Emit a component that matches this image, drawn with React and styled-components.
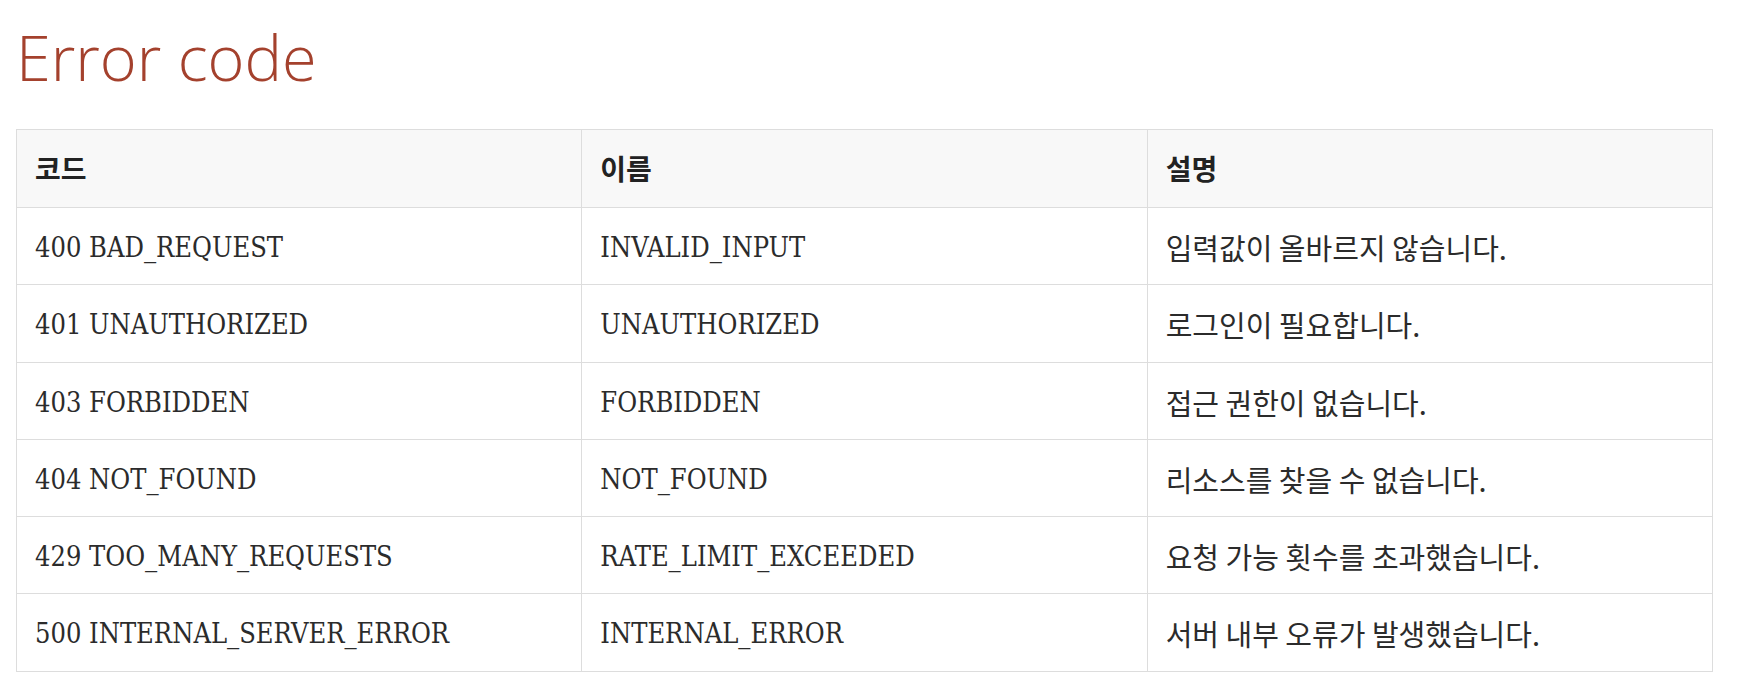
import React from 'react';
import styled, { createGlobalStyle } from 'styled-components';

const GlobalStyle = createGlobalStyle`
  html, body {
    margin: 0;
    padding: 0;
    background: #ffffff;
  }
`;

const Page = styled.div`
  padding: 18px 38px 0 16px;
  font-family: 'DejaVu Serif Condensed', 'DejaVu Serif', 'Noto Sans CJK KR', serif;
  font-stretch: condensed;
  color: #2b2b2b;
`;

const Title = styled.h1`
  margin: 0 0 34px;
  font-family: 'Open Sans', sans-serif;
  font-stretch: normal;
  font-weight: 300;
  font-size: 63px;
  line-height: 77px;
  color: #a4412d;
`;

const Table = styled.table`
  width: 100%;
  border-collapse: collapse;
  table-layout: fixed;
`;

const Th = styled.th`
  background: #f8f8f8;
  border: 1px solid #dddddd;
  padding: 17px 18px 18px;
  text-align: left;
  font-family: 'Noto Sans CJK KR', sans-serif;
  font-weight: 700;
  font-size: 28px;
  line-height: 42px;
  color: #222222;
`;

const Td = styled.td`
  border: 1px solid #dddddd;
  padding: ${({ $korean }) => ($korean ? '18px 18px 16px' : '19px 18px 15px')};
  text-align: left;
  font-size: ${({ $korean }) => ($korean ? '29px' : '27px')};
  line-height: 42.3px;
  font-family: ${({ $korean }) =>
    $korean ? "'Noto Sans CJK KR', sans-serif" : "'DejaVu Serif Condensed', 'DejaVu Serif', serif"};
  color: #2b2b2b;
`;

const rows = [
  ['400 BAD_REQUEST', 'INVALID_INPUT', '입력값이 올바르지 않습니다.'],
  ['401 UNAUTHORIZED', 'UNAUTHORIZED', '로그인이 필요합니다.'],
  ['403 FORBIDDEN', 'FORBIDDEN', '접근 권한이 없습니다.'],
  ['404 NOT_FOUND', 'NOT_FOUND', '리소스를 찾을 수 없습니다.'],
  ['429 TOO_MANY_REQUESTS', 'RATE_LIMIT_EXCEEDED', '요청 가능 횟수를 초과했습니다.'],
  ['500 INTERNAL_SERVER_ERROR', 'INTERNAL_ERROR', '서버 내부 오류가 발생했습니다.'],
];

export default function App() {
  return (
    <>
      <GlobalStyle />
      <Page>
        <Title>Error code</Title>
        <Table>
          <thead>
            <tr>
              <Th>코드</Th>
              <Th>이름</Th>
              <Th>설명</Th>
            </tr>
          </thead>
          <tbody>
            {rows.map(([code, name, desc]) => (
              <tr key={code}>
                <Td>{code}</Td>
                <Td>{name}</Td>
                <Td $korean>{desc}</Td>
              </tr>
            ))}
          </tbody>
        </Table>
      </Page>
    </>
  );
}
